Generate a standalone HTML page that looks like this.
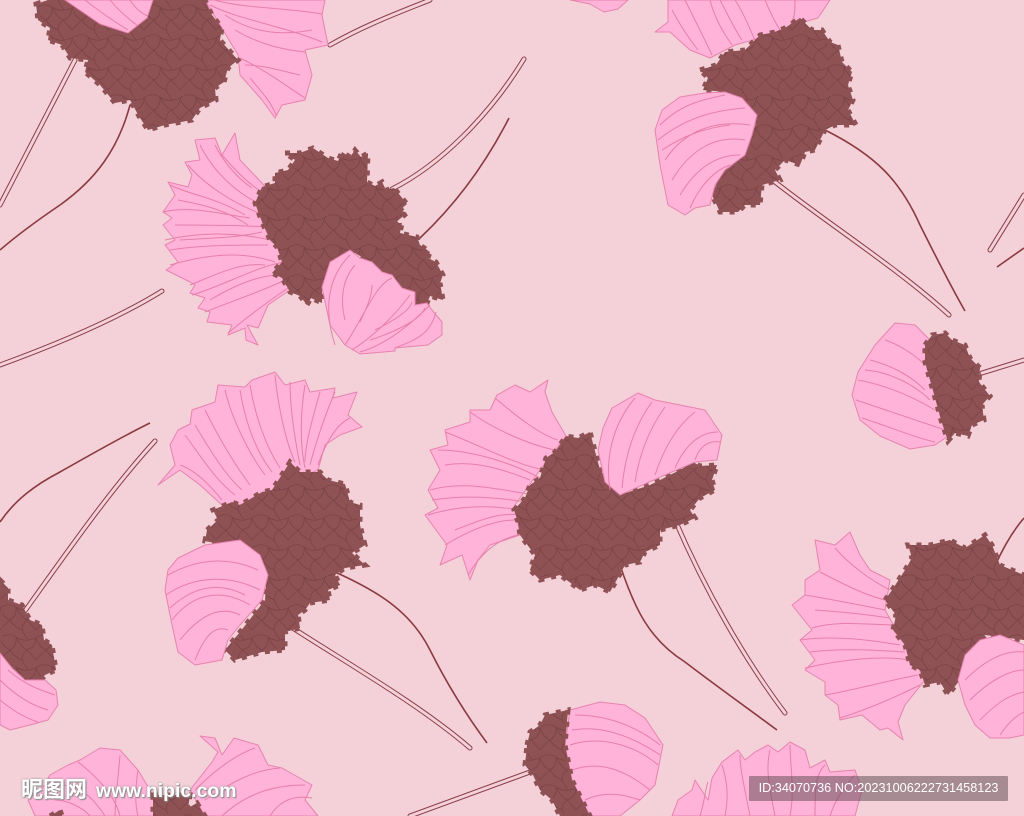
<!DOCTYPE html>
<html><head><meta charset="utf-8"><title>pattern</title>
<style>
html,body{margin:0;padding:0;background:#f4d0d8}
#w{position:relative;width:1024px;height:816px;overflow:hidden;background:#f4d0d8}
svg{position:absolute;left:0;top:0}
.p{fill:#ffb3d9;stroke:#e883ae;stroke-width:1;stroke-linejoin:round}
.b{fill:url(#sc);stroke:#8f5254;stroke-width:5;stroke-dasharray:5 7}
.l{fill:none;stroke:#e67fa9;stroke-width:1}
.d{fill:none;stroke:#8a3b40;stroke-width:1.6}
.o1{fill:none;stroke:#8a4048;stroke-width:5;stroke-linecap:round}
.o2{fill:none;stroke:#f4d0d8;stroke-width:3;stroke-linecap:round}
#lg{position:absolute;left:21px;top:772px;font:bold 22px "Liberation Sans","Noto Sans CJK SC",sans-serif;color:#fff;text-shadow:0 0 2px #888,1px 1px 1px #888;white-space:nowrap}
#lg span{font-size:19.4px;margin-left:9px;font-weight:bold}
#id{position:absolute;left:749px;top:776px;width:259px;height:25px;background:rgba(90,70,78,.5);border-radius:1px;color:#fff;font:12.7px/25px "Liberation Sans",sans-serif;text-align:center;white-space:nowrap}
</style></head><body><div id="w">
<svg width="1024" height="816" viewBox="0 0 1024 816">
<defs><pattern id="sc" width="36" height="30" patternUnits="userSpaceOnUse">
<rect width="36" height="30" fill="#8f5254"/>
<path d="M0 8Q8 2 16 7Q24 13 36 8M0 8Q3 17 10 20Q17 16 16 7M16 7Q20 16 27 20Q36 17 36 8M10 20Q14 27 22 30M10 20Q4 25 0 30M27 20Q32 25 36 30M27 20Q22 24 22 30M22 0Q24 4 28 10" fill="none" stroke="#784246" stroke-width=".8"/>
</pattern></defs>

<!-- stems -->
<path class="d" d="M130 105C118 150 95 180 60 205C35 222 15 237 0 250"/>
<path class="o1" d="M75 60L0 205M330 45C365 25 400 12 430 0M0 365C55 345 115 320 162 291"/>
<path class="o2" d="M75 60L0 205M330 45C365 25 400 12 430 0M0 365C55 345 115 320 162 291"/>
<path class="o1" d="M392 189C440 165 490 115 524 59M775 182C830 225 900 270 949 315M990 250L1024 195M982 373L1024 360"/>
<path class="o2" d="M392 189C440 165 490 115 524 59M775 182C830 225 900 270 949 315M990 250L1024 195M982 373L1024 360"/>
<path class="d" d="M420 238C455 205 485 165 509 118M825 130C875 155 900 180 920 225C935 255 950 285 965 311M997 267L1024 248"/>
<path class="o1" d="M22 615C65 555 110 490 155 441M288 625C350 665 420 705 470 748M675 520C705 590 745 660 785 713M410 816L530 772"/>
<path class="o2" d="M22 615C65 555 110 490 155 441M288 625C350 665 420 705 470 748M675 520C705 590 745 660 785 713M410 816L530 772"/>
<path class="d" d="M0 522C15 500 35 485 60 472C90 455 125 435 150 423M335 572C375 590 410 610 430 650C450 690 470 720 487 743M620 565C635 610 650 640 685 662C715 685 750 710 777 730M995 566C1003 548 1012 532 1024 518"/>

<!-- flower top-left -->
<polygon class="p" points="205,0 325,0 322,15 328,45 305,50 312,75 305,100 282,105 275,118 262,100 240,75 238,55"/>
<path class="l" d="M210 5C240 20 280 25 322 42M235 30C260 45 285 50 305 52M240 58C265 70 285 85 305 98M215 0C240 8 290 8 322 14M250 78C260 90 270 100 276 115M225 15C255 35 285 35 312 30M245 65C265 65 285 72 300 75"/>
<polygon class="b" points="36,4 48,0 205,0 212,15 222,28 220,40 238,60 228,68 224,82 215,88 216,100 200,108 192,120 165,125 148,130 140,118 130,100 115,103 100,85 85,72 88,60 70,58 62,45 48,40 50,28 38,20"/>
<polygon class="p" points="65,0 153,0 147,18 128,33 100,24"/>
<path class="l" d="M85 0C100 12 115 22 128 30M110 0C118 10 130 20 138 26M130 0C135 8 142 14 148 16"/>

<!-- flower top-center-left -->
<polygon class="p" points="235,133 240,160 262,183 290,215 320,260 340,300 287,292 268,305 258,328 247,325 258,345 246,340 245,328 228,335 232,325 207,322 210,312 198,308 205,298 190,293 195,285 190,282 166,270 178,262 165,245 175,240 163,225 172,218 163,212 175,195 168,182 188,187 192,175 185,162 200,160 195,140 215,138 222,155"/>
<path class="l" d="M188 165C205 185 235 205 265 215M200 145C215 175 240 195 262 205M222 155C235 170 250 185 262 192M170 185C190 195 215 197 245 215M163 212C190 205 225 215 250 218M175 225C205 225 250 225 280 228M165 240C200 232 235 232 270 240M170 250C200 245 240 245 268 245M170 265C205 255 240 250 275 262M190 285C215 275 240 262 265 265M192 295C225 285 260 265 285 262M205 312C235 300 265 290 285 280M228 333C250 315 270 300 288 288M178 200C205 205 225 210 248 225M180 240C210 238 235 238 262 232M210 300C235 285 260 275 280 275M215 145C225 165 240 180 252 188"/>
<polygon class="b" points="285,153 300,153 313,148 328,158 338,161 342,152 350,157 355,150 361,157 368,153 367,182 375,186 382,182 386,190 394,188 407,204 400,210 407,213 395,223 402,223 400,233 417,237 420,245 430,252 428,258 436,262 443,275 440,283 443,300 430,296 427,303 415,305 395,280 370,262 350,250 335,262 322,287 322,303 311,298 307,305 300,296 290,292 282,278 272,273 282,262 277,247 270,240 262,222 255,203 262,187 275,183 275,173 288,170 295,160"/>
<polygon class="p" points="322,287 330,262 350,250 360,258 372,262 382,272 392,275 402,288 415,292 415,305 427,303 432,310 442,322 442,335 428,345 395,348 395,351 360,354 345,345 330,325"/>
<path class="l" d="M335 345C322 305 330 275 350 255M345 345C365 315 375 285 392 278M352 350C375 335 395 315 410 295M360 352C385 345 410 325 430 305M395 348C415 340 430 335 436 312M345 320C340 300 342 280 355 265M360 322C368 305 372 295 372 285M375 330C395 320 410 310 412 302M370 340C395 332 420 320 425 308"/>

<!-- flower top-right -->
<polygon class="p" points="655,32 668,22 668,0 830,0 818,18 790,26 760,38 735,45 710,58 690,50 670,32"/>
<path class="l" d="M685 0C695 20 705 40 712 55M710 0C715 20 725 35 732 45M735 0C745 15 750 30 755 40M765 0C770 12 775 22 780 30M795 0C795 10 795 18 790 25M672 10C680 25 690 40 698 50M720 0C728 15 735 30 742 40"/>
<polygon class="b" points="700,70 716,65 725,52 745,50 760,35 775,32 785,28 800,18 812,30 822,30 830,42 838,45 842,62 852,72 848,85 853,100 848,110 856,125 835,125 825,130 815,150 805,152 800,165 785,160 775,170 780,180 762,185 760,205 745,205 738,212 720,212 712,195 720,175 745,155 757,120 725,92 703,90 708,78"/>
<polygon class="p" points="655,130 662,110 680,97 705,93 725,92 742,98 757,115 752,135 745,155 725,170 715,185 710,205 695,208 685,215 668,205 664,185 660,165"/>
<path class="l" d="M660 125C680 105 700 100 725 95M658 140C685 118 715 110 745 108M665 160C685 130 715 120 750 125M672 180C690 150 715 135 745 140M680 195C695 170 715 155 740 155M690 208C700 185 715 170 730 165M662 150C685 135 705 128 730 125"/>

<!-- right bud -->
<polygon class="p" points="852,395 858,372 875,345 895,323 915,325 930,340 925,360 935,395 950,435 935,445 910,449 880,436 860,420"/>
<path class="l" d="M856 400C885 410 915 420 945 430M858 380C885 385 910 395 935 410M870 360C890 365 910 375 925 390M885 340C900 345 915 355 925 365M862 418C885 425 915 438 935 442M865 370C890 372 915 385 930 400"/>
<polygon class="b" points="925,345 932,335 945,333 952,340 965,345 970,358 980,368 979,382 990,396 982,405 984,420 972,425 968,436 955,433 948,441 941,420 935,398 925,362"/>
<polygon class="p" points="570,0 628,0 618,9 604,12 590,4"/>

<!-- flower mid-left -->
<polygon class="p" points="158,485 175,465 170,445 178,430 190,424 192,410 215,402 218,385 245,387 252,380 275,372 285,385 305,380 310,392 335,388 333,398 357,392 348,415 362,427 340,435 325,445 318,470 240,505 222,505 200,485 180,470"/>
<path class="l" d="M180 465C195 470 210 485 222 500M185 435C200 455 215 480 235 495M205 410C220 440 235 465 250 485M225 390C232 420 250 455 265 475M250 385C255 415 265 445 280 468M275 375C278 405 285 440 295 462M305 385C300 415 300 445 305 468M335 392C325 415 315 445 310 465M350 418C335 425 325 445 318 465M195 425C210 450 225 475 242 490M240 390C245 420 255 450 272 472M290 382C290 410 295 440 300 465M320 392C312 420 305 445 305 462"/>
<polygon class="b" points="207,530 218,520 213,510 232,502 240,505 262,492 272,490 290,462 300,472 320,472 328,480 345,484 350,502 360,505 360,525 365,545 352,553 365,565 345,568 335,575 340,585 328,590 330,600 310,603 305,610 298,615 300,628 285,632 285,650 262,652 235,660 225,650 240,632 265,600 267,570 250,550 205,541"/>
<polygon class="p" points="165,590 168,570 178,558 205,545 240,540 260,555 268,575 262,600 240,625 228,640 222,660 195,665 178,652 172,625"/>
<path class="l" d="M168 575C195 560 225 555 258 570M166 595C195 575 230 575 260 590M172 620C195 590 225 590 250 605M180 640C200 615 220 605 240 615M195 660C205 635 215 625 228 630M170 608C195 585 220 582 245 595"/>

<!-- bottom-left-edge bud -->
<polygon class="b" points="0,580 8,588 8,600 22,605 30,620 42,625 44,640 52,645 56,670 45,675 40,682 25,680 0,655"/>
<polygon class="p" points="0,653 12,668 25,680 45,680 56,690 58,705 48,720 30,725 10,730 0,725"/>
<path class="l" d="M0 680C15 695 30 705 48 710M0 700C12 710 25 718 38 722M8 670C25 685 40 690 55 695"/>

<!-- flower center -->
<polygon class="p" points="548,380 545,392 552,412 566,436 540,470 515,505 520,535 490,545 478,560 470,580 462,555 440,565 447,545 425,515 438,508 428,490 440,470 430,450 448,445 445,430 470,422 470,410 490,410 497,395 515,385 530,392"/>
<path class="l" d="M430 490C465 480 500 490 535 495M445 432C480 445 515 465 545 470M470 412C495 430 530 445 555 450M495 398C515 415 540 435 558 440M445 465C475 460 505 470 530 480M428 515C460 505 490 505 520 510M445 545C470 530 495 520 515 520M468 575C480 555 495 540 518 535M438 450C470 450 510 462 540 478M432 500C465 495 495 497 525 502M455 530C480 520 500 512 520 515"/>
<polygon class="b" points="514,510 525,498 530,485 540,478 546,458 555,452 566,436 578,438 590,432 600,470 620,495 650,485 680,470 693,462 700,466 717,465 712,480 715,490 700,498 690,510 695,518 680,525 660,530 660,545 645,552 640,562 625,565 610,592 595,585 580,590 560,575 540,580 530,570 535,555 520,535 518,522"/>
<polygon class="p" points="598,450 603,428 612,408 638,393 655,400 680,405 705,410 722,435 717,460 695,462 665,475 620,495 605,482"/>
<path class="l" d="M610 490C605 460 612 425 635 398M635 482C640 450 652 425 665 407M655 475C665 445 678 425 695 412M675 468C685 445 700 432 718 432M695 460C700 445 710 440 720 442M622 488C625 455 635 425 652 402"/>

<!-- flower right -->
<polygon class="p" points="792,605 805,595 805,580 820,570 815,540 835,545 850,532 860,555 870,570 890,580 885,610 925,680 905,705 898,722 903,740 888,728 880,730 862,715 840,720 838,705 825,695 825,682 805,670 815,660 800,640 812,630"/>
<path class="l" d="M805 595C835 600 860 605 885 610M820 572C845 585 865 595 885 600M835 548C850 565 870 580 890 590M800 640C835 635 870 640 900 645M812 628C840 620 870 625 895 625M805 668C840 660 880 655 910 660M825 695C855 690 890 680 918 675M840 718C865 710 890 700 920 685M815 610C845 612 870 615 890 618M810 652C840 648 875 650 905 652"/>
<polygon class="b" points="885,600 892,590 905,570 912,558 908,545 930,545 950,540 965,548 985,535 992,545 1000,565 1024,575 1024,640 985,635 965,665 960,680 948,695 940,682 925,685 920,670 910,665 905,645 893,630 896,615"/>
<polygon class="p" points="958,680 965,655 980,640 1000,635 1024,645 1024,735 1010,738 990,738 975,725 965,705"/>
<path class="l" d="M965 680C985 660 1005 650 1024 652M970 700C990 680 1010 670 1024 670M980 720C1000 700 1010 695 1024 692M1000 735C1010 720 1018 715 1024 712"/>

<!-- bottom bud center -->
<polygon class="p" points="570,710 600,702 625,705 645,718 663,745 655,785 640,800 620,816 590,816 572,780 565,745"/>
<path class="l" d="M575 715C605 715 635 725 660 745M570 745C600 735 635 745 658 765M572 770C600 760 625 770 650 790M585 800C605 790 625 795 640 800M572 730C600 725 630 735 660 755"/>
<polygon class="b" points="527,745 530,732 540,725 545,715 568,710 565,745 572,780 590,816 560,816 552,800 540,790 533,775 525,765"/>

<!-- bottom-left flower -->
<polygon class="p" points="28,800 45,785 50,775 68,765 80,760 100,748 120,750 138,770 153,795 155,816 35,816"/>
<path class="l" d="M45 790C65 780 85 785 105 816M78 762C95 775 115 795 120 816M120 755C118 780 115 800 115 816M55 800C70 800 85 810 90 816M138 770C135 790 135 805 138 816"/>
<polygon class="p" points="190,790 212,762 218,752 200,736 215,738 222,755 234,738 258,745 268,765 282,768 312,785 305,800 318,816 205,816"/>
<path class="l" d="M195 790C215 770 235 755 255 748M205 800C235 780 255 770 280 768M222 816C250 790 280 785 305 785M270 816C280 800 295 795 312 798"/>
<polygon class="b" points="153,795 190,795 188,808 197,803 205,816 153,816"/>
<polygon class="b" points="50,816 60,810 62,816"/>

<!-- bottom-right flower -->
<polygon class="p" points="672,816 678,800 692,790 695,780 708,800 712,778 722,762 738,750 745,760 755,752 768,745 778,752 790,742 805,750 810,768 825,760 830,772 855,770 862,790 855,816"/>
<path class="l" d="M700 816C705 800 705 790 708 782M725 816C730 790 725 775 722 765M750 816C745 790 740 770 740 755M775 816C770 790 765 770 770 750M790 816C795 790 790 765 790 745M815 816C815 790 815 775 825 765M830 816C835 800 845 785 855 775"/>
</svg>
<div id="lg">昵图网<span>www.nipic.com</span></div>
<div id="id">ID:34070736 NO:20231006222731458123</div>
</div></body></html>
